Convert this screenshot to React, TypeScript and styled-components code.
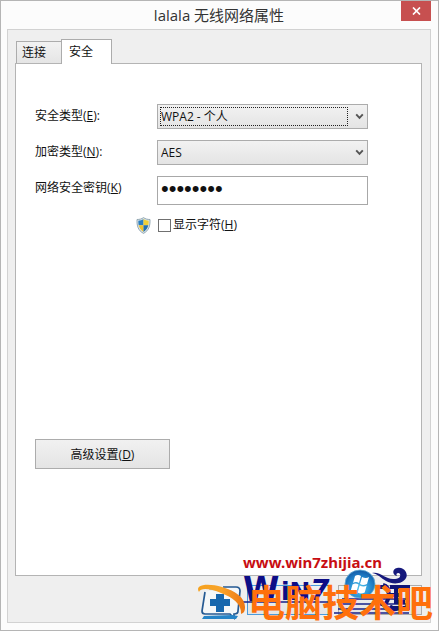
import React from "react";
import styled, { createGlobalStyle, css } from "styled-components";

const GlobalStyle = createGlobalStyle`
  * { box-sizing: border-box; }
  body { margin: 0; background: #fcfcfc; }
  body, button, input, select {
    font-family: "Open Sans", "Noto Sans CJK SC", sans-serif;
    font-size: 12px;
    color: #111;
  }
`;

const Window = styled.main`
  position: relative;
  display: flex;
  flex-direction: column;
  min-height: 100vh;
  padding: 0 7px 7px 6px;
  border: 1px solid #b5b5b5;
  background: #fcfcfc;
`;

const TitleBar = styled.header`
  display: grid;
  grid-template-columns: 30px 1fr 30px;
  height: 28px;
`;

const Title = styled.h1`
  grid-column: 2;
  margin: 0;
  text-align: center;
  font-size: 15px;
  font-weight: 400;
  line-height: 28px;
  color: #333;
`;

const CloseButton = styled.button`
  display: flex;
  align-items: center;
  justify-content: center;
  height: 20px;
  padding: 0;
  border: 0;
  background: #c75050;
`;

const Client = styled.div`
  flex: 1;
  display: flex;
  flex-direction: column;
  padding: 9px 8px 6px 7px;
  border: 1px solid #d2d2d2;
  background: #efefef;
`;

const TabList = styled.div`
  display: flex;
  align-items: flex-end;
  height: 24px;
  padding-left: 1px;
`;

const Tab = styled.button<{ $active?: boolean }>`
  height: 22px;
  padding: 0 15px 0 5px;
  border: 1px solid #acacac;
  border-bottom: 0;
  border-right: 0;
  background: linear-gradient(#f2f2f2, #e5e5e5);
  line-height: 20px;
  text-align: left;
  ${(p) =>
    p.$active &&
    css`
      position: relative;
      height: 25px;
      margin-bottom: -1px;
      padding: 0 18px 0 7px;
      border-right: 1px solid #acacac;
      background: #fff;
    `}
`;

const Panel = styled.section`
  flex: 1;
  display: flex;
  flex-direction: column;
  align-items: flex-start;
  padding: 40px 18px 0 19px;
  border: 1px solid #b4b4b4;
  background: #fff;
`;

const Form = styled.form`
  display: grid;
  grid-template-columns: 122px minmax(0, 211px);
  row-gap: 11px;
  width: 100%;
`;

const Label = styled.label`
  height: 24px;
  line-height: 24px;
  white-space: nowrap;
`;

const SelectBox = styled.div<{ $focused?: boolean }>`
  position: relative;
  height: 25px;
  ${(p) =>
    p.$focused &&
    css`
      &::after {
        content: "";
        position: absolute;
        inset: 3px 20px 3px 3px;
        border: 1px dotted #222;
        pointer-events: none;
      }
    `}
`;

const Select = styled.select`
  appearance: none;
  width: 100%;
  height: 100%;
  padding: 0 20px 0 3px;
  border: 1px solid #acacac;
  border-radius: 0;
  background: linear-gradient(#f2f2f2, #e4e4e4);
  outline: 0;
`;

const Chevron = styled.svg`
  position: absolute;
  top: 9px;
  right: 4px;
  pointer-events: none;
`;

const Password = styled.input`
  width: 100%;
  height: 29px;
  padding: 0 3px 4px;
  border: 1px solid #a8a8a8;
  background: #fff;
  font-family: "Liberation Sans", sans-serif;
  font-size: 22px;
  outline: 0;
`;

const ShowRow = styled.div`
  grid-column: 1 / -1;
  display: flex;
  align-items: center;
  gap: 7px;
  height: 18px;
  padding-left: 101px;
`;

const CheckLabel = styled.label`
  display: flex;
  align-items: center;
  gap: 2px;
  line-height: 18px;
`;

const Checkbox = styled.input`
  appearance: none;
  width: 13px;
  height: 13px;
  margin: 0;
  border: 1px solid #707070;
  background: #fff;
`;

const PushButton = styled.button<{ $primary?: boolean }>`
  height: 30px;
  min-width: 84px;
  padding: 0 8px;
  border: 1px solid ${(p) => (p.$primary ? "#4a9bdc" : "#acacac")};
  background: linear-gradient(#f1f1f1, #e4e4e4);
`;

const AdvancedButton = styled(PushButton)`
  width: 135px;
  margin: auto 0 106px;
`;

const Footer = styled.footer`
  display: flex;
  justify-content: flex-end;
  gap: 7px;
  height: 40px;
  padding-top: 9px;
`;

const Watermark = styled.div`
  position: absolute;
  right: 5px;
  bottom: 5px;
  width: 236px;
  height: 76px;
  pointer-events: none;
`;

const SiteAddress = styled.span`
  position: absolute;
  left: 46px;
  top: 4px;
  font-family: "Noto Sans", sans-serif;
  font-size: 15px;
  font-weight: 700;
  line-height: 18px;
  color: #c80d12;
`;

const Artwork = styled.svg`
  position: absolute;
  inset: 0;
  overflow: visible;
`;

function DropArrow() {
  return (
    <Chevron width="9" height="7" viewBox="0 0 9 7" fill="none" aria-hidden="true">
      <path d="M1.2 1.3 4.5 4.8 7.8 1.3" stroke="#555" strokeWidth="1.9" />
    </Chevron>
  );
}

function Shield() {
  return (
    <svg width="15" height="17" viewBox="0 0 15 17" aria-hidden="true">
      <path d="M7.5.6C5.6 2 3.4 2.5 1 2.5c-.2 6.3 1 11 6.500 13.900C13 13.500 14.200 8.800 14 2.500 11.600 2.500 9.400 2 7.500.6Z" fill="#dbe5ea" stroke="#8aa0ad" strokeWidth=".9" />
      <path d="M7.500 2.100C6 3.100 4.200 3.600 2.300 3.700c0 1.700.1 3.200.4 4.600h4.800Z" fill="#2c7fc0" />
      <path d="M7.500 2.100c1.500 1 3.300 1.500 5.200 1.600 0 1.700-.1 3.200-.4 4.600H7.500Z" fill="#f0cf35" />
      <path d="M2.700 8.300c.7 3 2.200 5.100 4.800 6.600V8.300Z" fill="#f0c22b" />
      <path d="M12.300 8.300c-.7 3-2.200 5.100-4.800 6.600V8.300Z" fill="#236fac" />
    </svg>
  );
}

function BrandArtwork() {
  return (
    <Artwork width="236" height="76" viewBox="0 0 236 76" aria-label="Win7 电脑技术吧">
      <defs>
        <radialGradient id="orb" cx=".5" cy=".65" r=".65">
          <stop offset="0" stopColor="#55c8ef" />
          <stop offset=".6" stopColor="#2286cd" />
          <stop offset="1" stopColor="#1359a5" />
        </radialGradient>
        <linearGradient id="swoosh" x2="1">
          <stop offset="0" stopColor="#f5a11d" />
          <stop offset=".5" stopColor="#f8a32a" />
          <stop offset="1" stopColor="#ed7411" />
        </linearGradient>
      </defs>

      <g fill="#0d0d86" fontFamily="DejaVu Sans, sans-serif" fontWeight="700">
        <text x="46" y="52" fontSize="33">W</text>
        <text x="84" y="51" fontSize="25">iN</text>
        <text x="113" y="51" fontSize="28" fontStyle="italic">7</text>
      </g>
      <path d="M46 53h90M145 50h66M144 55h68M141 60h72M137 64h75" stroke="#17218b" strokeWidth="1.500" />
      <path d="M175 24c8-2 13 6 21 6 6 0 8-2 7-5-1-2-5-1-3 2-5-1-5-7 0-8 6-2 12 5 9 10-3 6-13 7-20 3-5-3-8-7-14-8Z" fill="#16197c" />
      <g fill="none" stroke="#101477" strokeWidth="4">
        <path d="M180 38h8M186 36c8 2 7 15 1 20M193 38h18v21h-18M199 38v15h9M193 46h11" />
        <path d="M183 55c8 1 10 8 18 5M187 48h9M193 57c5 4 13 4 17 0" strokeWidth="3" />
      </g>
      <ellipse cx="163" cy="35" rx="15" ry="14" fill="url(#orb)" stroke="#66afd7" strokeWidth=".8" />
      <path d="M158 27q3-2 6 0l-2 7q-3-2-6 0ZM165 28q4 2 7 0l-2 7q-4 2-7 0ZM155.500 35.500q3-2 6 0l-2 7q-3-2-6 0ZM162.700 36.500q4 2 7 0l-2 7q-4 2-7 0Z" fill="#fff" />

      <path d="M8 43 5 62q0 3 3 3h25l4 4v-4q4 0 4-3l2-20q0-4-4-4H26" fill="#f5f7f8" stroke="#255a93" strokeWidth="1.700" />
      <path d="M19 45h8v5h6v7h-6v6h-8v-6h-6v-7h6Z" fill="#1767ad" />
      <path d="m7 67 28-1 6 1-2 3H5Z" fill="#2684c7" />
      <path d="M13 38c15-1 27 5 31 11-9-5-19-8-32-8Z" fill="#b7bbc0" />
      <path d="M2 43c-5-8 10-9 23-5 14 4 23 11 23 20 0 4-1 6-4 7 1-10-9-17-20-21C14 40 4 38 2 43Z" fill="url(#swoosh)" />

      <text x="51" y="68" fontFamily="Noto Sans CJK SC, sans-serif" fontSize="37" fontWeight="700" fill="#ff700c">
        电脑技术吧
      </text>
    </Artwork>
  );
}

export default function App() {
  return (
    <>
      <GlobalStyle />
      <Window>
        <TitleBar>
          <Title>lalala 无线网络属性</Title>
          <CloseButton type="button" aria-label="关闭">
            <svg width="9" height="8" viewBox="0 0 9 8" aria-hidden="true">
              <path d="m1 .5 7 7M8 .5l-7 7" stroke="#fff" strokeWidth="1.700" />
            </svg>
          </CloseButton>
        </TitleBar>
        <Client>
          <TabList role="tablist">
            <Tab type="button" role="tab" aria-selected="false">连接</Tab>
            <Tab type="button" role="tab" aria-selected="true" $active>安全</Tab>
          </TabList>
          <Panel>
            <Form>
              <Label htmlFor="security">安全类型(<u>E</u>):</Label>
              <SelectBox $focused>
                <Select id="security" defaultValue="wpa2">
                  <option value="wpa2">WPA2 - 个人</option>
                </Select>
                <DropArrow />
              </SelectBox>
              <Label htmlFor="encryption">加密类型(<u>N</u>):</Label>
              <SelectBox>
                <Select id="encryption" defaultValue="aes">
                  <option value="aes">AES</option>
                </Select>
                <DropArrow />
              </SelectBox>
              <Label htmlFor="key">网络安全密钥(<u>K</u>)</Label>
              <Password id="key" type="password" defaultValue="password" />
              <ShowRow>
                <Shield />
                <CheckLabel>
                  <Checkbox type="checkbox" />
                  <span>显示字符(<u>H</u>)</span>
                </CheckLabel>
              </ShowRow>
            </Form>
            <AdvancedButton type="button"><span>高级设置(<u>D</u>)</span></AdvancedButton>
          </Panel>
          <Footer>
            <PushButton type="button" $primary aria-label="确定" />
            <PushButton type="button" aria-label="取消" />
          </Footer>
        </Client>
        <Watermark>
          <SiteAddress>www.win7zhijia.cn</SiteAddress>
          <BrandArtwork />
        </Watermark>
      </Window>
    </>
  );
}
